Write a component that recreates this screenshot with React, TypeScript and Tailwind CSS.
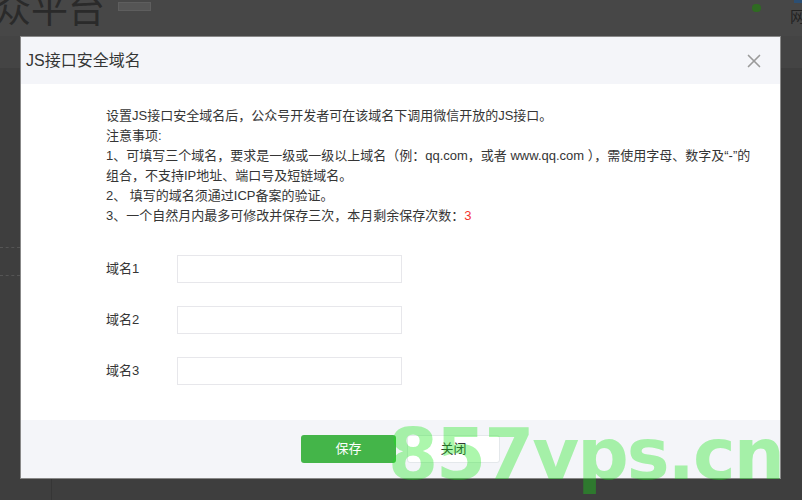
import * as React from 'react'
import { X } from 'lucide-react'

const font = { fontFamily: '"Liberation Sans", "Noto Sans CJK SC", sans-serif' }

function Field({ label }: { label: string }) {
  return (
    <div className="flex items-center h-[28px]">
      <span className="w-[71px] text-[13px] text-[#353535]">{label}</span>
      <input className="w-[225px] h-[28px] border border-[#e7e7eb] bg-white outline-none px-2 text-[13px]" />
    </div>
  )
}

export default function App() {
  return (
    <div
      className="relative w-[802px] h-[500px] overflow-hidden bg-[#3e3e3e] text-[#353535]"
      style={font}
    >
      {/* page behind the mask */}
      <div className="h-[36px] bg-[#474747] flex items-start relative">
        <span className="text-[37px] leading-none text-[#2a2a2a] -mt-[8px] -ml-[6px]">众平台</span>
        <span className="mt-[2px] ml-[13px] w-[33px] h-[9px] bg-[#555] border border-[#5e5e5e]" />
        <span className="absolute left-[752px] top-[4px] w-[9px] h-[8px] rounded-full bg-[#2f6b22]" />
        <span className="absolute left-[790px] top-[6px] text-[15px] text-[#222]">网</span>
        <span className="absolute left-[794px] top-0 w-[8px] h-[3px] bg-[#2c4f73]" />
      </div>
      <div className="flex h-[32px]">
        <div className="w-[20px] bg-[#444]" />
        <div className="flex-1" />
        <div className="w-[22px] bg-[#444]" />
      </div>
      <div className="w-[20px] h-[180px] border-b border-dashed border-[#555]" />
      <div className="w-[20px] h-[28px] border-b border-dashed border-[#555]" />
      <div className="absolute left-[51px] top-[478px] w-px h-[22px] bg-[#363636]" />

      {/* dialog */}
      <div className="absolute left-[20px] top-[36px] w-[761px] h-[443px] bg-white border border-[#888] flex flex-col">
        <div className="h-[47px] bg-[#f4f5f9] flex items-center justify-between pl-[5px] pr-[15px]">
          <span className="text-[16px] text-[#353535]">JS接口安全域名</span>
          <X className="w-[22px] h-[22px] text-[#9a9a9a]" strokeWidth={1.8} />
        </div>
        <div className="flex-1 pl-[85px] pt-[22px]">
          <div className="text-[13px] leading-[20px] text-[#353535]">
            <p>设置JS接口安全域名后，公众号开发者可在该域名下调用微信开放的JS接口。</p>
            <p>注意事项:</p>
            <p>1、可填写三个域名，要求是一级或一级以上域名（例：qq.com，或者 www.qq.com ），需使用字母、数字及“-”的</p>
            <p>组合，不支持IP地址、端口号及短链域名。</p>
            <p>2、 填写的域名须通过ICP备案的验证。</p>
            <p>
              3、一个自然月内最多可修改并保存三次，本月剩余保存次数：<span className="text-[#f43530]">3</span>
            </p>
          </div>
          <div className="mt-[29px] flex flex-col gap-[23px]">
            <Field label="域名1" />
            <Field label="域名2" />
            <Field label="域名3" />
          </div>
        </div>
        <div className="h-[58px] bg-[#f4f5f9] flex items-center justify-center gap-[11px]">
          <button className="w-[95px] h-[28px] rounded-[3px] bg-[#44b549] text-white text-[13px]">保存</button>
          <button className="w-[93px] h-[28px] rounded-[3px] bg-white border border-[#e4e8eb] text-[13px] text-[#353535]">
            关闭
          </button>
        </div>
      </div>

      {/* watermark */}
      <div
        className="absolute left-[388px] top-[418px] text-[72px] font-bold leading-none tracking-[-2px] text-[rgba(17,233,17,0.35)] pointer-events-none"
        style={{ fontFamily: '"DejaVu Sans", sans-serif' }}
      >
        857vps.cn
      </div>
    </div>
  )
}
